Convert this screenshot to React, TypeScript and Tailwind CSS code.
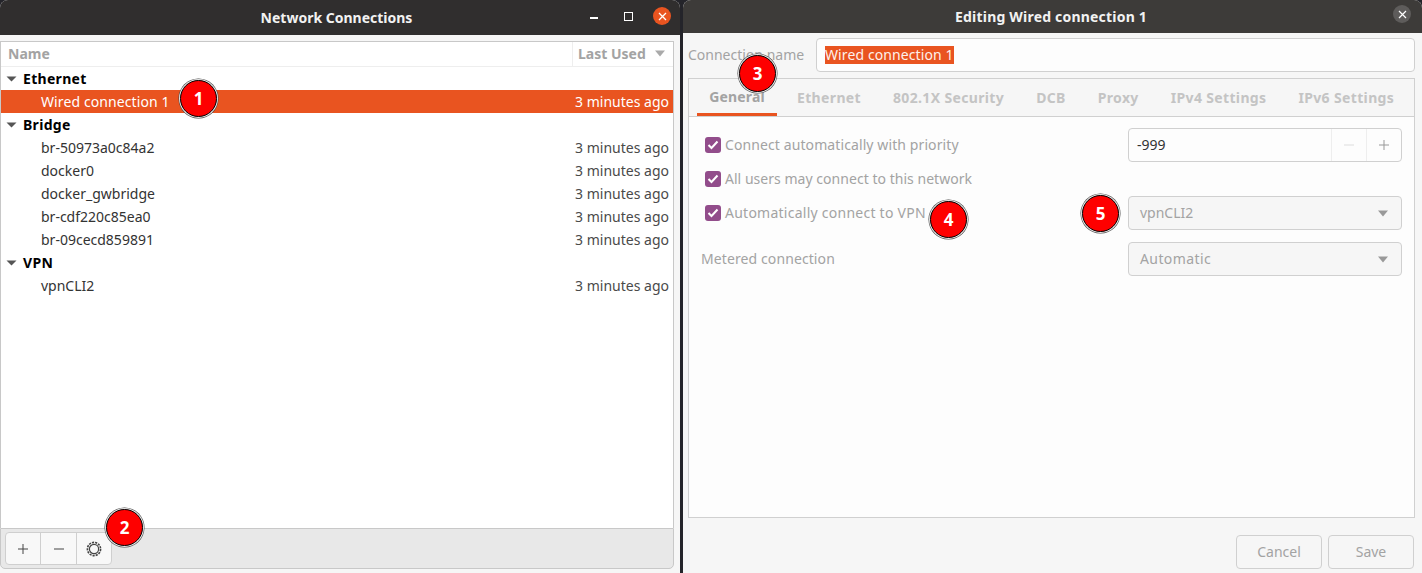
import React from "react";

const font = "font-['Noto_Sans','Open_Sans',sans-serif]";

const Badge = ({ n, className }: { n: number; className: string }) => (
  <div
    className={`absolute flex h-[37px] w-[37px] items-center justify-center rounded-full border-[1.5px] border-black bg-[#fe0000] text-[17px] font-bold text-white shadow-[0_0_0_1px_#e4e4e4,0_0_0_1.5px_#444] ${className}`}
  >
    {n}
  </div>
);

const Caret = ({ className = "" }: { className?: string }) => (
  <svg width="12" height="7" viewBox="0 0 12 7" className={className}>
    <path d="M1 0.5h10L6 6.5z" fill="currentColor" />
  </svg>
);

const Group = ({ label }: { label: string }) => (
  <div className="flex h-[23px] items-center pl-[5px] text-[14px] font-bold tracking-[0.3px] text-black">
    <svg width="11" height="6" viewBox="0 0 11 6" className="text-[#555]">
      <path d="M0.5 0.5h10L5.5 5.5z" fill="currentColor" />
    </svg>
    <span className="ml-[6px]">{label}</span>
  </div>
);

const Row = ({ name, active }: { name: string; active?: boolean }) => (
  <div
    className={`flex h-[23px] items-center justify-between pl-[40px] pr-[4px] text-[14px] ${
      active ? "bg-[#e95420] text-white" : "text-[#333]"
    }`}
  >
    <span className={active ? "tracking-[0.1px]" : ""}>{name}</span>
    <span className={active ? "text-white" : "text-[#4a4a4a]"}>3 minutes ago</span>
  </div>
);

const Check = ({ label, className = "" }: { label: string; className?: string }) => (
  <div className="flex h-[34px] items-center pl-[16px] text-[14px] text-[#a3a3a3]">
    <span className="mr-[4px] flex h-[16px] w-[16px] items-center justify-center rounded-[3px] bg-[#924d8b]">
      <svg width="12" height="10" viewBox="0 0 12 10">
        <path d="M1.5 5l3 3 6-6.5" fill="none" stroke="white" strokeWidth="2" />
      </svg>
    </span>
    <span className={`pb-[2px] ${className}`}>{label}</span>
  </div>
);

const Combo = ({ value, className = "" }: { value: string; className?: string }) => (
  <div className="flex h-[34px] w-[274px] items-center justify-between rounded-[4px] border border-[#d0d0d0] bg-[#f6f6f6] pl-[11px] pr-[12px] text-[14px] text-[#a3a3a3]">
    <span className={`pb-[2px] ${className}`}>{value}</span>
    <Caret className="text-[#999]" />
  </div>
);

const tabs = ["Ethernet", "802.1X Security", "DCB", "Proxy", "IPv4 Settings", "IPv6 Settings"];

export default function App() {
  return (
    <div className={`relative flex h-[573px] w-[1422px] overflow-hidden bg-[#24242a] ${font}`}>
      {/* left window */}
      <div className="flex h-[573px] w-[680px] flex-col overflow-hidden rounded-t-[8px] bg-[#f6f6f6]">
        <div className="relative flex h-[35px] shrink-0 items-center justify-center bg-[#302e2e] pr-[7px] text-[14px] font-bold text-[#f2f2f2]">
          Network Connections
          <div className="absolute right-[9px] top-[7px] flex items-center">
            <div className="mt-[4px] h-[2px] w-[8px] bg-white" />
            <div className="ml-[26px] h-[9px] w-[9px] border-[1.5px] border-white" />
            <div className="ml-[20px] flex h-[18px] w-[18px] items-center justify-center rounded-full bg-[#e95420]">
              <svg width="9" height="9" viewBox="0 0 9 9">
                <path d="M1 1l7 7M8 1l-7 7" stroke="white" strokeWidth="1.3" />
              </svg>
            </div>
          </div>
        </div>
        <div className="flex flex-1 flex-col pb-[4px] pr-[6px] pt-[6px]">
          <div className="flex flex-1 flex-col border border-b-0 border-[#c8c8c8] bg-white">
            <div className="flex h-[25px] shrink-0 items-center border-b border-[#eee] text-[14px] font-bold text-[#a3a3a3]">
              <div className="flex-1 pb-[2px] pl-[7px]">Name</div>
              <div className="flex w-[101px] items-center gap-[8px] self-stretch border-l border-[#eee] pb-[2px] pl-[5px]">
                Last Used
                <Caret className="text-[#aaa]" />
              </div>
            </div>
            <Group label="Ethernet" />
            <Row name="Wired connection 1" active />
            <Group label="Bridge" />
            <Row name="br-50973a0c84a2" />
            <Row name="docker0" />
            <Row name="docker_gwbridge" />
            <Row name="br-cdf220c85ea0" />
            <Row name="br-09cecd859891" />
            <Group label="VPN" />
            <Row name="vpnCLI2" />
          </div>
          <div className="flex h-[41px] shrink-0 items-start rounded-b-[5px] border border-[#c8c8c8] bg-[#e8e8e8] pl-[4px] pt-[3px]">
            <div className="flex h-[33px] w-[107px] rounded-[4px] border border-[#cfcfcf] bg-[#f8f8f8] text-[#444]">
              <div className="flex w-[35px] items-center justify-center border-r border-[#cfcfcf]">
                <svg width="12" height="12" viewBox="0 0 12 12">
                  <path d="M6 1v10M1 6h10" stroke="currentColor" strokeWidth="1" />
                </svg>
              </div>
              <div className="flex w-[36px] items-center justify-center border-r border-[#cfcfcf]">
                <svg width="12" height="12" viewBox="0 0 12 12">
                  <path d="M1 6h10" stroke="currentColor" strokeWidth="1" />
                </svg>
              </div>
              <div className="flex flex-1 items-center justify-center pr-[1px]">
                <svg width="16" height="16" viewBox="0 0 16 16">
                  <circle cx="8" cy="8" r="4.6" fill="none" stroke="currentColor" strokeWidth="1.2" />
                  <circle cx="8" cy="8" r="6.6" fill="none" stroke="currentColor" strokeWidth="1.6" strokeDasharray="2.2 1" />
                </svg>
              </div>
            </div>
          </div>
        </div>
      </div>

      {/* right window */}
      <div className="ml-[3px] flex h-[573px] w-[739px] flex-col overflow-hidden rounded-t-[8px] bg-[#f6f6f6]">
        <div className="relative flex h-[33px] shrink-0 items-center justify-center bg-[#3d3b39] pr-[3px] text-[14px] font-bold tracking-[0.2px] text-[#f2f2f2]">
          Editing Wired connection 1
          <div className="absolute right-[11px] top-[5px] flex h-[18px] w-[18px] items-center justify-center rounded-full bg-[#5e5c5b]">
            <svg width="9" height="9" viewBox="0 0 9 9">
              <path d="M1 1l7 7M8 1l-7 7" stroke="white" strokeWidth="1.2" />
            </svg>
          </div>
        </div>
        <div className="flex flex-1 flex-col pl-[5px] pr-[7px] pt-[5px]">
          <div className="flex h-[34px] items-center justify-between">
            <span className="pb-[2px] text-[14px] text-[#a3a3a3]">Connection name</span>
            <div className="flex h-[34px] w-[599px] items-center rounded-[4px] border border-[#d0d0d0] bg-[#fdfdfd] pl-[8px] text-[14px]">
              <span className="flex h-[18px] items-center bg-[#e95420] pb-[1px] tracking-[0.1px] text-[#fdf1ec]">Wired connection 1</span>
            </div>
          </div>
          <div className="mt-[6px] flex h-[440px] flex-col border border-[#d0d0d0] bg-[#fdfdfd]">
            <div className="flex h-[38px] shrink-0 items-stretch border-b border-[#d0d0d0] bg-[#f6f6f6] pl-[8px] text-[14px] font-bold tracking-[0.35px] text-[#c4c4c4]">
              <div className="flex w-[80px] items-center justify-center border-b-[3px] border-[#e95420] tracking-[0.15px] text-[#a3a3a3]">General</div>
              <div className="flex flex-1 items-center gap-[32px] pl-[20px]">
                {tabs.map((t) => (
                  <span key={t}>{t}</span>
                ))}
              </div>
            </div>
            <div className="flex flex-col pt-[11px] pr-[12px]">
              <div className="flex items-center justify-between">
                <Check label="Connect automatically with priority" className="tracking-[0.1px]" />
                <div className="flex h-[34px] w-[274px] items-center rounded-[4px] border border-[#d0d0d0] bg-[#fdfdfd] text-[14px] text-[#333]">
                  <span className="flex-1 pb-[2px] pl-[8px]">-999</span>
                  <div className="flex h-full w-[35px] items-center justify-center border-l border-[#eee] text-[#ddd]">
                    <svg width="12" height="12" viewBox="0 0 12 12">
                      <path d="M1 6h10" stroke="currentColor" strokeWidth="1" />
                    </svg>
                  </div>
                  <div className="flex h-full w-[35px] items-center justify-center border-l border-[#eee] text-[#999]">
                    <svg width="12" height="12" viewBox="0 0 12 12">
                      <path d="M6 1v10M1 6h10" stroke="currentColor" strokeWidth="1" />
                    </svg>
                  </div>
                </div>
              </div>
              <Check label="All users may connect to this network" className="tracking-[0.03px]" />
              <div className="flex items-center justify-between">
                <Check label="Automatically connect to VPN" className="tracking-[0.25px]" />
                <Combo value="vpnCLI2" />
              </div>
              <div className="mt-[12px] flex items-center justify-between">
                <span className="pb-[2px] pl-[12px] text-[14px] tracking-[0.1px] text-[#a3a3a3]">Metered connection</span>
                <Combo value="Automatic" className="tracking-[0.4px]" />
              </div>
            </div>
          </div>
          <div className="mt-[17px] flex justify-end gap-[6px] pr-[1px]">
            <div className="flex h-[34px] w-[86px] items-center justify-center rounded-[4px] border border-[#d0d0d0] pb-[2px] text-[14px] text-[#a3a3a3]">Cancel</div>
            <div className="flex h-[34px] w-[86px] items-center justify-center rounded-[4px] border border-[#d0d0d0] pb-[2px] text-[14px] text-[#a3a3a3]">Save</div>
          </div>
        </div>
      </div>

      <Badge n={1} className="left-[180px] top-[80px]" />
      <Badge n={2} className="left-[106px] top-[509px]" />
      <Badge n={3} className="left-[739px] top-[55px]" />
      <Badge n={4} className="left-[930px] top-[201px]" />
      <Badge n={5} className="left-[1082px] top-[195px]" />
    </div>
  );
}
